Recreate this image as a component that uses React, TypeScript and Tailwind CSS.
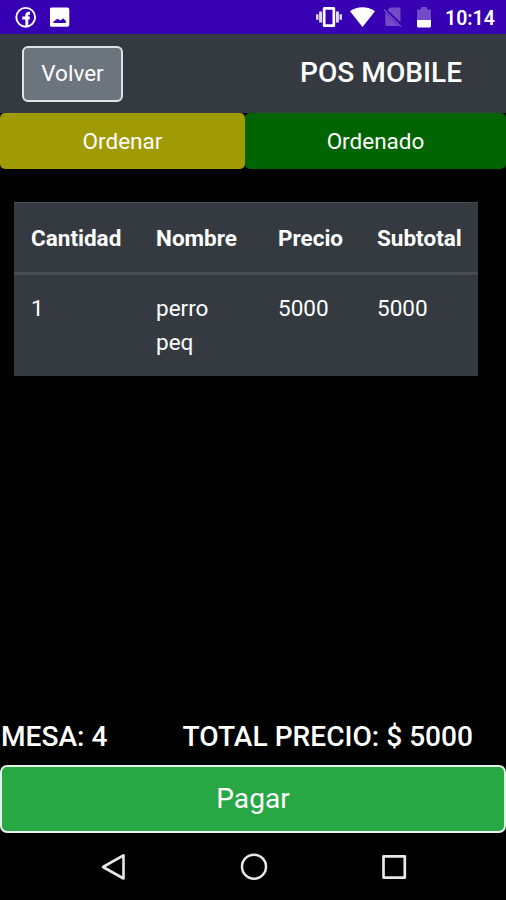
interface OrderItem {
  cantidad: number;
  nombre: string;
  precio: number;
}

const items: OrderItem[] = [{ cantidad: 1, nombre: 'perro peq', precio: 5000 }];

const headings = ['Cantidad', 'Nombre', 'Precio', 'Subtotal'];

function StatusBar() {
  return (
    <div className="flex h-[34px] shrink-0 items-center justify-between bg-[#3700b3] pl-[15px] pr-[10px] text-white">
      <div className="flex items-center gap-[13px]">
        {/* Facebook */}
        <svg width="22" height="22" viewBox="0 0 22 22" fill="none" stroke="currentColor">
          <circle cx="10.700" cy="11.300" r="9.400" strokeWidth="1.900" />
          <path d="M15 7.200h-1.200c-1.400 0-2 .700-2 2.100V20M7.300 12h7.400" strokeWidth="2.900" />
        </svg>
        {/* Picture */}
        <svg width="20" height="20" viewBox="0 0 20 20" fill="currentColor">
          <path
            fillRule="evenodd"
            d="M1.700.5h15.600a2 2 0 0 1 2 2v15.300a2 2 0 0 1-2 2H1.700a2 2 0 0 1-2-2V2.500a2 2 0 0 1 2-2zM3.500 16h12.300v-2.200L13 11.300l-2.300 2.200-3.200-1.800-4 2.800z"
          />
        </svg>
      </div>

      <div className="flex items-center">
        {/* Vibrate */}
        <svg width="26" height="20" viewBox="0 0 26 20" fill="currentColor">
          <path fillRule="evenodd" d="M8.300 0h9.400a1.500 1.500 0 0 1 1.500 1.500v17a1.500 1.500 0 0 1-1.500 1.500H8.300a1.500 1.500 0 0 1-1.500-1.500v-17A1.500 1.500 0 0 1 8.300 0zM9.500 2.800v14.400h7V2.800z" />
          <path d="M3.100 4.500h2.900v11H3.100zM0 7.200h2.500v5.600H0zM20 4.500h2.900v11H20zM23.500 7.200H26v5.600h-2.500z" opacity=".85" />
        </svg>
        {/* Wifi */}
        <svg className="ml-[8px]" width="25" height="20" viewBox="0 0 25 20" fill="currentColor">
          <path d="M0 4.300C7-1.200 18-1.200 25 4.300L12.500 20z" />
        </svg>
        {/* No SIM */}
        <svg className="ml-[8px]" width="19" height="20" viewBox="0 0 19 20">
          <path d="M7 0.500h9a1.500 1.500 0 0 1 1.500 1.500v13.300L4.500 3zM2.300 5.500L15.500 18.800l-.500.200H3.800a1.500 1.500 0 0 1-1.500-1.500z" fill="#734bc8" />
          <path d="M.8 2.500l17 17" stroke="#734bc8" strokeWidth="1.600" />
        </svg>
        {/* Battery */}
        <svg className="ml-[14px]" width="16" height="21" viewBox="0 0 16 21">
          <path d="M5 0h6v2.300h2.500a1.500 1.500 0 0 1 1.500 1.500V13H1V3.800a1.500 1.500 0 0 1 1.500-1.500H5z" fill="#734bc8" />
          <path d="M1 13h14v6a1.500 1.500 0 0 1-1.500 1.500h-11A1.500 1.500 0 0 1 1 19z" fill="white" />
        </svg>
        <span className="ml-[13px] mt-[3px] w-[51px] whitespace-nowrap text-[19.500px] font-semibold leading-none">10:14</span>
      </div>
    </div>
  );
}

function NavigationBar() {
  return (
    <div className="flex h-[67px] shrink-0 items-center justify-between pl-[99px] pr-[99px]">
      <svg width="27" height="28" viewBox="0 0 27 28" fill="none" stroke="#e8e8e8" strokeWidth="2.600" strokeLinejoin="round">
        <path d="M24.500 2.300v23.200L4 14z" />
      </svg>
      <svg width="28" height="28" viewBox="0 0 28 28" fill="none" stroke="#e8e8e8" strokeWidth="2.500">
        <circle cx="14" cy="13.700" r="12" />
      </svg>
      <svg width="26" height="26" viewBox="0 0 26 26" fill="none" stroke="#e8e8e8" strokeWidth="2.700" strokeLinejoin="round">
        <rect x="2.500" y="2.300" width="21.300" height="21.300" />
      </svg>
    </div>
  );
}

export default function App() {
  const total = items.reduce((sum, item) => sum + item.cantidad * item.precio, 0);

  return (
    <div className="flex h-[900px] w-[506px] flex-col overflow-hidden bg-black font-[Roboto,sans-serif] text-white">
      <StatusBar />

      {/* Header */}
      <header className="flex h-[79px] shrink-0 items-center justify-between bg-[#343a40] pl-[22px] pr-[44px]">
        <button className="h-[56px] w-[101px] rounded-[6px] border-2 border-[#dfe3e6] bg-[#6c757d] text-[22.500px]">
          Volver
        </button>
        <h1 className="text-[28.100px] font-medium leading-none">POS MOBILE</h1>
      </header>

      {/* Tabs */}
      <div className="flex h-[56px] shrink-0 text-[22.500px]">
        <button className="w-[245px] rounded-[5px] bg-[#a09a05] pt-[2px]">Ordenar</button>
        <button className="flex-1 rounded-[5px] bg-[#006400] pt-[2px]">Ordenado</button>
      </div>

      {/* Order */}
      <table className="ml-[14px] mt-[33px] w-[464px] table-fixed border-collapse bg-[#343a40] text-left text-[22.500px] leading-[33.700px]">
        <colgroup>
          <col className="w-[125px]" />
          <col className="w-[122px]" />
          <col className="w-[99px]" />
          <col className="w-[118px]" />
        </colgroup>
        <thead>
          <tr className="h-[71px] border-b-[3px] border-t border-[#454d55]">
            {headings.map((heading) => (
              <th key={heading} className="px-[17px] pb-[16px] pt-[19px] font-bold">
                {heading}
              </th>
            ))}
          </tr>
        </thead>
        <tbody>
          {items.map((item) => (
            <tr key={item.nombre} className="h-[102px] align-top">
              <td className="px-[17px] pt-[17px]">{item.cantidad}</td>
              <td className="px-[17px] pt-[17px]">{item.nombre}</td>
              <td className="px-[17px] pt-[17px]">{item.precio}</td>
              <td className="px-[17px] pt-[17px]">{item.cantidad * item.precio}</td>
            </tr>
          ))}
        </tbody>
      </table>

      {/* Total */}
      <footer className="mt-auto">
        <div className="mb-[11px] flex justify-between pl-px pr-[33px] text-[28.100px] font-medium leading-[34px]">
          <span>MESA: 4</span>
          <span>TOTAL PRECIO: $ {total}</span>
        </div>
        <button className="block h-[68px] w-full rounded-[7px] border-2 border-[#e4f3e7] bg-[#28a745] text-[28.100px]">
          Pagar
        </button>
      </footer>

      <NavigationBar />
    </div>
  );
}
